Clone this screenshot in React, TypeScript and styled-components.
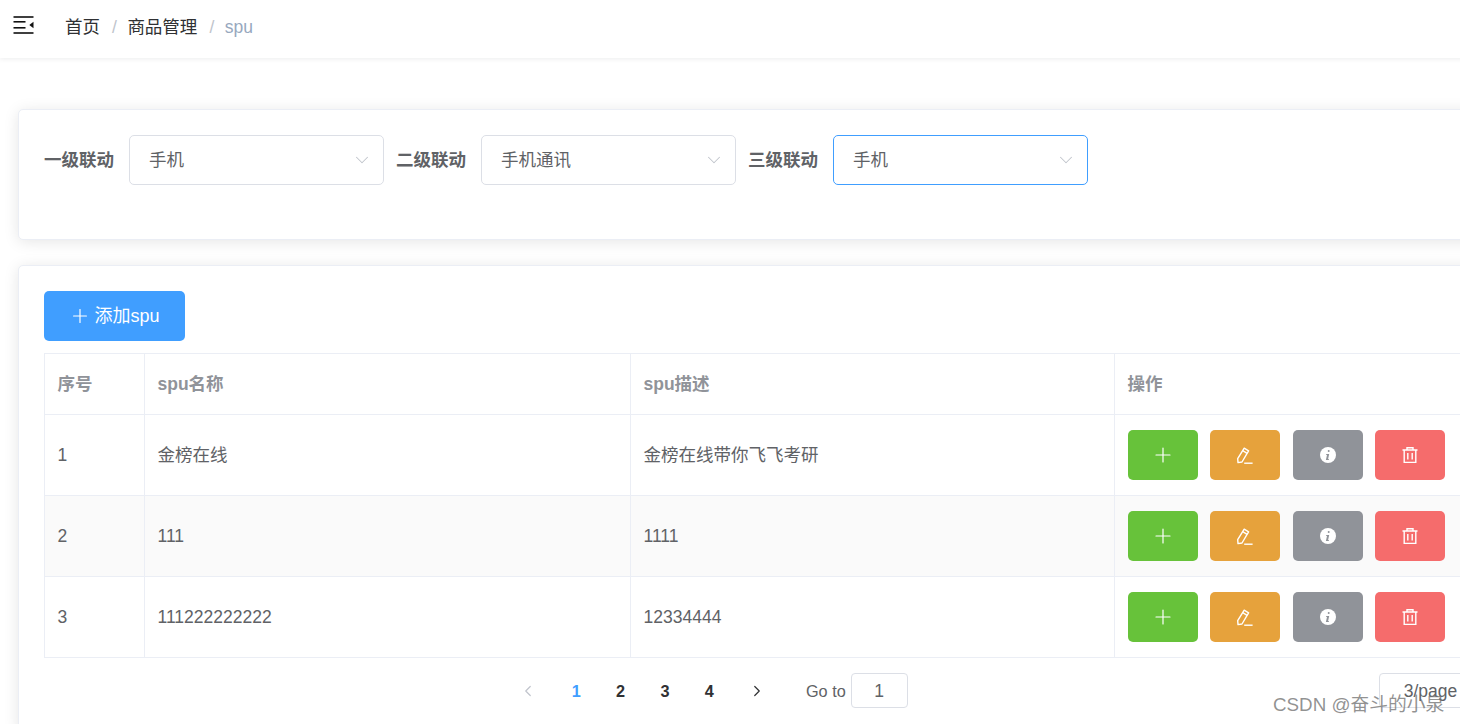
import * as React from "react";
import styled, { createGlobalStyle } from "styled-components";
import { Plus, ChevronDown, ChevronLeft, ChevronRight } from "lucide-react";

const GlobalStyle = createGlobalStyle`
  html, body {
    margin: 0;
    height: 724px;
    overflow: hidden;
    background: #fff;
  }
  body, input, button {
    font-family: "Liberation Sans", "Noto Sans CJK SC", sans-serif;
    line-height: 24px;
  }
`;

const Page = styled.div`
  width: 1640px;
  height: 724px;
  position: relative;
`;

const Navbar = styled.header`
  height: 58px;
  display: flex;
  align-items: center;
  padding-left: 13px;
  box-shadow: 0 1px 5px rgba(0, 21, 41, 0.08);
  position: relative;
`;

const FoldSvg = styled.svg`
  margin-bottom: 8px;
`;

const Crumbs = styled.nav`
  display: flex;
  align-items: center;
  margin-left: 31px;
  margin-bottom: 4px;
  font-size: 17.5px;
  color: #303133;
`;

const Crumb = styled.span<{ $last?: boolean }>`
  color: ${(p) => (p.$last ? "#97a8be" : "#303133")};
`;

const Slash = styled.span`
  color: #c0c4cc;
  margin: 0 10.5px 0 12px;
`;

const Main = styled.main`
  padding: 51px 0 0 18px;
  display: flex;
  flex-direction: column;
  gap: 25px;
`;

const Card = styled.section<{ $height?: number }>`
  background: #fff;
  border: 1px solid #ebeef5;
  border-radius: 5px;
  box-shadow: 0 2px 15px rgba(0, 0, 0, 0.1);
  padding: 25px;
  box-sizing: border-box;
  ${(p) => (p.$height ? `height: ${p.$height}px;` : "")}
`;

const Form = styled.form`
  display: flex;
  align-items: center;
`;

const Label = styled.label`
  font-size: 17.5px;
  font-weight: 700;
  color: #606266;
  margin-right: 15px;
`;

const Select = styled.div<{ $focus?: boolean }>`
  width: 255px;
  height: 50px;
  box-sizing: border-box;
  border: 1px solid ${(p) => (p.$focus ? "#409eff" : "#dcdfe6")};
  border-radius: 5px;
  display: flex;
  align-items: center;
  justify-content: space-between;
  padding: 0 10px 0 19px;
  margin-right: 12px;
  font-size: 17.5px;
  color: #606266;
  svg {
    color: #c0c4cc;
  }
`;

const AddButton = styled.button`
  width: 141px;
  height: 50px;
  border: 0;
  border-radius: 5px;
  background: #409eff;
  color: #fff;
  font-size: 18px;
  display: flex;
  align-items: center;
  justify-content: center;
  gap: 3px;
  padding: 0;
  margin-bottom: 12px;
`;

const Table = styled.table`
  width: 100%;
  border-collapse: collapse;
  table-layout: fixed;
  font-size: 17.5px;
  color: #606266;
`;

const Th = styled.th`
  height: 61px;
  box-sizing: border-box;
  border: 1px solid #ebeef5;
  text-align: left;
  padding: 0 12.5px;
  color: #909399;
  font-weight: 700;
`;

const Row = styled.tr<{ $striped?: boolean }>`
  background: ${(p) => (p.$striped ? "#fafafa" : "#fff")};
`;

const Td = styled.td`
  height: 81px;
  box-sizing: border-box;
  border: 1px solid #ebeef5;
  padding: 0 12.5px 1px;
`;

const Actions = styled.div`
  display: flex;
  gap: 12.5px;
  margin-bottom: -1px;
`;

const ActionButton = styled.button<{ $color: string }>`
  width: 70px;
  height: 50px;
  border: 0;
  border-radius: 5px;
  padding: 0;
  background: ${(p) => p.$color};
  color: #fff;
  display: flex;
  align-items: center;
  justify-content: center;
`;

const Pager = styled.div`
  display: flex;
  align-items: center;
  height: 35px;
  margin-top: 15px;
  padding-left: 462px;
`;

const PagerArrow = styled.span<{ $disabled?: boolean }>`
  width: 44.4px;
  display: flex;
  justify-content: center;
  margin: ${(p) => (p.$disabled ? "0 3.6px 0 0" : "0 0 0 3px")};
  color: ${(p) => (p.$disabled ? "#c0c4cc" : "#303133")};
`;

const PageNo = styled.span<{ $active?: boolean }>`
  width: 44.4px;
  text-align: center;
  font-size: 16.25px;
  font-weight: 700;
  color: ${(p) => (p.$active ? "#409eff" : "#303133")};
`;

const GoTo = styled.span`
  display: flex;
  align-items: center;
  margin-left: 27px;
  font-size: 16.25px;
  color: #606266;
  gap: 5px;
`;

const GoInput = styled.div`
  width: 57px;
  height: 35px;
  box-sizing: border-box;
  border: 1px solid #dcdfe6;
  border-radius: 4px;
  display: flex;
  align-items: center;
  justify-content: center;
  font-size: 17.5px;
`;

const SizeSelect = styled.div`
  margin-left: 471px;
  width: 130px;
  height: 35px;
  box-sizing: border-box;
  border: 1px solid #dcdfe6;
  border-radius: 4px;
  padding-left: 24px;
  font-size: 17.5px;
  line-height: 35px;
  color: #606266;
`;

const Watermark = styled.div`
  position: absolute;
  left: 1273px;
  top: 694px;
  font-size: 18.8px;
  line-height: 22px;
  color: rgba(110, 110, 110, 0.75);
  white-space: nowrap;
`;

const FoldIcon = () => (
  <FoldSvg width="21" height="18" viewBox="0 0 21 18" fill="#111">
    <rect x="0.5" y="0.2" width="20" height="1.6" />
    <rect x="0.5" y="5" width="12" height="1.6" />
    <rect x="0.5" y="11" width="12" height="1.6" />
    <rect x="0.5" y="16.2" width="20" height="1.6" />
    <path d="M20.5 5.8v6.4L16.3 9z" />
  </FoldSvg>
);

const EditIcon = () => (
  <svg width="16" height="17" viewBox="0 0 16 17" fill="none" stroke="#fff" strokeWidth="1.4">
    <path d="M7.2 1.2 11.6 3.8 5 15 1 15.6 0.7 11.6z" strokeLinejoin="round" />
    <path d="M5.7 3.7 10.1 6.3" />
    <path d="M7.2 16.2h8.4" />
  </svg>
);

const InfoIcon = () => (
  <svg width="16" height="16" viewBox="0 0 16 16">
    <circle cx="8" cy="8" r="8" fill="#fff" />
    <path d="M8.7 3.1a1 1 0 1 1 0 2 1 1 0 0 1 0-2zM6.3 6.9h2.9l-1.1 5h.9l-.3 1H5.9l1.1-5h-.9z" fill="#909399" />
  </svg>
);

const TrashIcon = () => (
  <svg width="16" height="16" viewBox="0 0 16 16" fill="none" stroke="#fff" strokeWidth="1.4">
    <path d="M0.5 3h15M5 3V.7h6V3M2.2 3v12.4h11.6V3M5.8 6v6.5M10.2 6v6.5" />
  </svg>
);

const spus = [
  { id: 1, name: "金榜在线", desc: "金榜在线带你飞飞考研" },
  { id: 2, name: "111", desc: "1111" },
  { id: 3, name: "111222222222", desc: "12334444" },
];

const App = () => (
  <Page>
    <GlobalStyle />
    <Navbar>
      <FoldIcon />
      <Crumbs>
        <Crumb>首页</Crumb>
        <Slash>/</Slash>
        <Crumb>商品管理</Crumb>
        <Slash>/</Slash>
        <Crumb $last>spu</Crumb>
      </Crumbs>
    </Navbar>
    <Main>
      <Card $height={131}>
        <Form>
          <Label>一级联动</Label>
          <Select>
            手机
            <ChevronDown size={22} strokeWidth={1.1} />
          </Select>
          <Label>二级联动</Label>
          <Select>
            手机通讯
            <ChevronDown size={22} strokeWidth={1.1} />
          </Select>
          <Label>三级联动</Label>
          <Select $focus>
            手机
            <ChevronDown size={22} strokeWidth={1.1} />
          </Select>
        </Form>
      </Card>
      <Card>
        <AddButton type="button">
          <Plus size={22} strokeWidth={1.3} />
          添加spu
        </AddButton>
        <Table>
          <colgroup>
            <col width="100" />
            <col width="486" />
            <col width="484" />
            <col />
          </colgroup>
          <thead>
            <tr>
              <Th>序号</Th>
              <Th>spu名称</Th>
              <Th>spu描述</Th>
              <Th>操作</Th>
            </tr>
          </thead>
          <tbody>
            {spus.map((s, i) => (
              <Row key={s.id} $striped={i === 1}>
                <Td>{s.id}</Td>
                <Td>{s.name}</Td>
                <Td>{s.desc}</Td>
                <Td>
                  <Actions>
                    <ActionButton $color="#67c23a">
                      <Plus size={24} strokeWidth={1.2} />
                    </ActionButton>
                    <ActionButton $color="#e6a23c">
                      <EditIcon />
                    </ActionButton>
                    <ActionButton $color="#909399">
                      <InfoIcon />
                    </ActionButton>
                    <ActionButton $color="#f56c6c">
                      <TrashIcon />
                    </ActionButton>
                  </Actions>
                </Td>
              </Row>
            ))}
          </tbody>
        </Table>
        <Pager>
          <PagerArrow $disabled>
            <ChevronLeft size={18} strokeWidth={1.6} />
          </PagerArrow>
          <PageNo $active>1</PageNo>
          <PageNo>2</PageNo>
          <PageNo>3</PageNo>
          <PageNo>4</PageNo>
          <PagerArrow>
            <ChevronRight size={18} strokeWidth={1.6} />
          </PagerArrow>
          <GoTo>
            Go to
            <GoInput>1</GoInput>
          </GoTo>
          <SizeSelect>3/page</SizeSelect>
        </Pager>
      </Card>
    </Main>
    <Watermark>CSDN @奋斗的小泉</Watermark>
  </Page>
);

export default App;
